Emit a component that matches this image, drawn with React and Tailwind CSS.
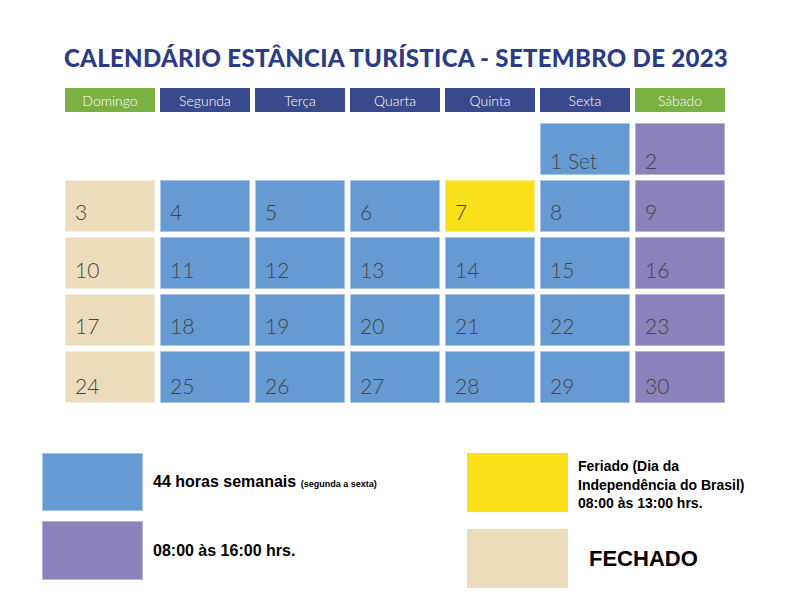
import React from "react";

const BLUE = "bg-[#659ad2] border-[#a9c6e8]";
const PURPLE = "bg-[#8b81bb] border-[#b9b2da]";
const BEIGE = "bg-[#ecdcbb] border-[#f6eedd]";
const YELLOW = "bg-[#fae019] border-[#fcec80]";

const headers = [
  { t: "Domingo", c: "bg-[#7bb042]" },
  { t: "Segunda", c: "bg-[#394a8c]" },
  { t: "Terça", c: "bg-[#394a8c]" },
  { t: "Quarta", c: "bg-[#394a8c]" },
  { t: "Quinta", c: "bg-[#394a8c]" },
  { t: "Sexta", c: "bg-[#394a8c]" },
  { t: "Sábado", c: "bg-[#7bb042]" },
];

const rowPad = ["pb-[1px]", "pb-[7px]", "pb-[6px]", "pb-[7px]", "pb-[4px]"];

function cellColor(d, col) {
  if (d === 7) return YELLOW;
  if (col === 0) return BEIGE;
  if (col === 6) return PURPLE;
  return BLUE;
}

const cells = [];
for (let i = 0; i < 5; i++) cells.push(null);
for (let d = 1; d <= 30; d++) cells.push(d);

export default function App() {
  return (
    <div className="w-[788px] h-[602px] bg-white relative" style={{ fontFamily: "'Lato', 'Open Sans', sans-serif" }}>
      <div className="pt-[43px] flex justify-center">
        <h1 className="text-[24px] leading-[30px] font-black text-[#2c3b86] tracking-[0.3px] translate-x-[2px]" style={{ fontFamily: "'Lato', sans-serif" }}>
          CALENDÁRIO ESTÂNCIA TURÍSTICA - SETEMBRO DE 2023
        </h1>
      </div>
      <div className="pl-[65px] mt-[15px]">
        <div className="grid grid-cols-[repeat(7,90px)] gap-x-[5px]">
          {headers.map((h) => (
            <div key={h.t} className={`${h.c} h-[24px] flex items-center justify-center pt-[1px] text-white text-[14px] font-light`}>
              {h.t}
            </div>
          ))}
        </div>
        <div className="grid grid-cols-[repeat(7,90px)] gap-x-[5px] gap-y-[5px] mt-[11px]">
          {cells.map((d, i) =>
            d === null ? (
              <div key={i} className="h-[52px]" />
            ) : (
              <div
                key={i}
                className={`${cellColor(d, i % 7)} ${rowPad[Math.floor(i / 7)]} border h-[52px] flex items-end pl-[9px] text-[21px] leading-[24px] font-light text-[#454545]`}
              >
                {d === 1 ? "1 Set" : d}
              </div>
            )
          )}
        </div>
      </div>
      <div className="flex mt-[50px]" style={{ fontFamily: "'Liberation Sans', Arial, sans-serif" }}>
        <div className="pl-[42px] w-[467px] flex flex-col gap-[10px]">
          <div className="flex items-center">
            <div className="w-[101px] h-[58px] bg-[#659ad2] border border-[#a9c6e8]" />
            <div className="ml-[10px] font-bold text-black text-[16px]">
              44 horas semanais <span className="text-[9px]">(segunda a sexta)</span>
            </div>
          </div>
          <div className="flex items-center">
            <div className="w-[101px] h-[59px] bg-[#8b81bb] border border-[#b9b2da]" />
            <div className="ml-[10px] font-bold text-black text-[16px]">08:00 às 16:00 hrs.</div>
          </div>
        </div>
        <div className="flex flex-col gap-[16px]">
          <div className="flex items-start">
            <div className="w-[101px] h-[59px] bg-[#fae019]" />
            <div className="ml-[10px] mt-[4px] font-bold text-black text-[14px] leading-[18.5px]">
              Feriado (Dia da<br />Independência do Brasil)<br />08:00 às 13:00 hrs.
            </div>
          </div>
          <div className="flex items-center">
            <div className="w-[101px] h-[59px] bg-[#ecdcbb]" />
            <div className="ml-[21px] font-bold text-black text-[22px]">FECHADO</div>
          </div>
        </div>
      </div>
    </div>
  );
}
